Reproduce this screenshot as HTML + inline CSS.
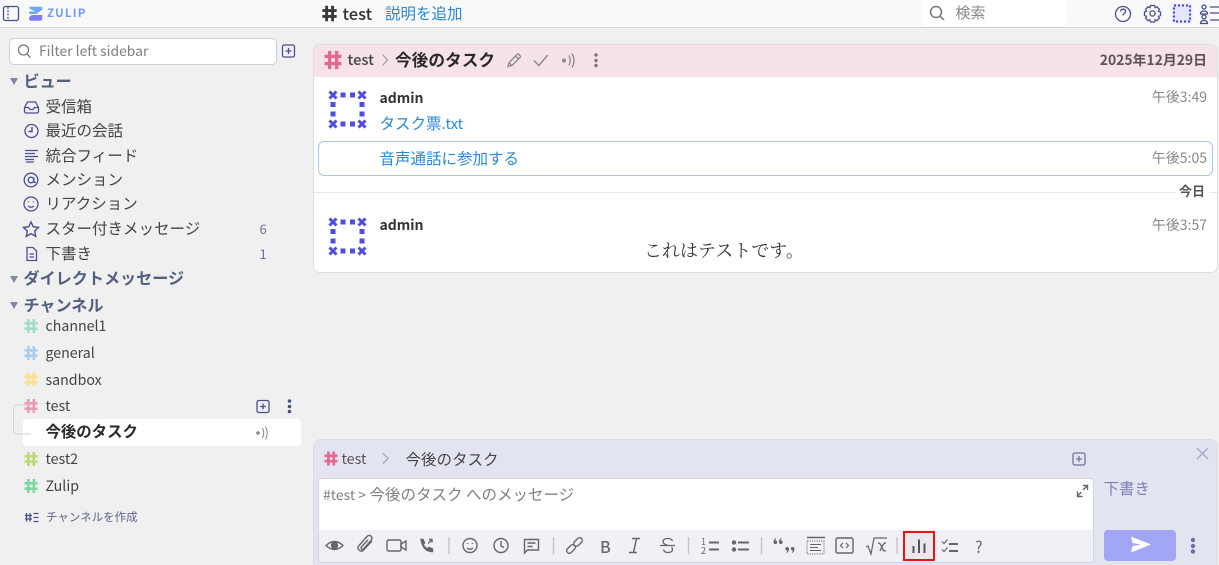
<!DOCTYPE html>
<html lang="ja"><head><meta charset="utf-8"><title>Zulip</title>
<style>
html,body{margin:0;padding:0;width:1219px;height:565px;overflow:hidden;background:#f0f0f0}
body{position:relative;font-family:"Noto Sans CJK JP","Liberation Sans",sans-serif;color:#3b3b3b}
div{position:absolute;box-sizing:border-box}
.t{white-space:nowrap;line-height:20px;height:20px;font-size:15.5px}
.b{font-weight:700}
.sec{font-size:16.1px;font-weight:700;color:#51607f;left:23.500px}
.nav{left:45.500px;color:#444}
.ch{left:45.500px;font-size:14.200px;color:#444}
.ts{font-size:14px;color:#8a8a8a;right:12px}
.cnt{font-size:13px;color:#6a6f9f;left:259.500px}
svg{position:absolute;left:0;top:0;z-index:2}
.t{z-index:3}
</style></head><body>
<div style="left:0;top:0;width:1219px;height:28px;background:#f9f9f9;border-bottom:1px solid #d4d4d4"></div>
<div style="left:921px;top:0;width:146px;height:26px;background:#fff;border-radius:0 0 6px 6px"></div>
<div style="left:9px;top:38px;width:268px;height:27px;background:#fff;border:1px solid #cfcfcf;border-radius:5px"></div>
<div style="left:23px;top:419px;width:278px;height:27px;background:#fff;border-radius:4px"></div>
<div style="left:313px;top:44px;width:905px;height:229px;background:#fff;border:1px solid #dedede;border-radius:7px;overflow:hidden"><div style="left:0;top:0;width:903px;height:32px;background:#f6e3ea"></div></div>
<div style="left:318px;top:141px;width:895px;height:35px;border:1px solid #aac4ea;border-radius:6px"></div>
<div style="left:314px;top:192px;width:862px;height:1px;background:#e8e8e8"></div>
<div style="left:1210px;top:192px;width:7px;height:1px;background:#e8e8e8"></div>
<div style="left:313px;top:439px;width:905px;height:130px;background:#e2e4f0;border:1px solid #dcdcdc;border-radius:8px"></div>
<div style="left:318px;top:478px;width:776px;height:85px;background:#fff;border:1px solid #d3d5e4;border-radius:4px;overflow:hidden"><div style="left:0;top:51px;width:776px;height:34px;background:#f0f1f7"></div></div>
<div style="left:1104px;top:530px;width:72px;height:31px;background:#a3a6f5;border-radius:4px"></div>
<div style="left:903px;top:531px;width:32px;height:30px;background:#e8e8ee;border:2px solid #ee1111;z-index:1"></div>

<svg width="1219" height="565" viewBox="0 0 1219 565" fill="none">
<defs>
<g id="h" stroke-width="2.6"><path d="M-6.500-2.700H6.500M-6.500 2.700H6.500M-2.600-7V7M2.800-7V7"/></g>
<g id="av" fill="#4f4fd8">
<path d="M-3.500-3.500 3.500 3.500M3.500-3.500-3.500 3.500" stroke="#4f4fd8" stroke-width="3" transform="translate(333 95)"/>
<path d="M-3.500-3.500 3.500 3.500M3.500-3.500-3.500 3.500" stroke="#4f4fd8" stroke-width="3" transform="translate(362 95)"/>
<path d="M-3.500-3.500 3.500 3.500M3.500-3.500-3.500 3.500" stroke="#4f4fd8" stroke-width="3" transform="translate(333 124)"/>
<path d="M-3.500-3.500 3.500 3.500M3.500-3.500-3.500 3.500" stroke="#4f4fd8" stroke-width="3" transform="translate(362 124)"/>
<rect x="340.500" y="92.500" width="5" height="5"/><rect x="350" y="92.500" width="5" height="5"/>
<rect x="340.500" y="121.500" width="5" height="5"/><rect x="350" y="121.500" width="5" height="5"/>
<rect x="330.500" y="102" width="5" height="5"/><rect x="330.500" y="111.500" width="5" height="5"/>
<rect x="359.500" y="102" width="5" height="5"/><rect x="359.500" y="111.500" width="5" height="5"/>
</g>
<g id="plus"><rect x="-6" y="-6" width="12" height="12" rx="1.800" stroke-width="1.300"/><path d="M-3 0H3M0-3V3" stroke-width="1.300"/></g>
</defs>
<!-- top left -->
<g stroke="#4a4f8f" stroke-width="1.300"><rect x="3.500" y="6.500" width="15" height="14" rx="2"/><path d="M8 7v13" stroke-dasharray="1.800 1.500"/></g>
<path d="M30.500 6.700H42.300V9.500L36.500 14H30.500Q29 14 29 12.500V11.500H35L29 8.200Q29 6.700 30.500 6.700Z" fill="#6fa8f8"/>
<path d="M32 15H42.300V18Q42.300 20.800 39.500 20.800H31.500Q29 20.800 29 18.500Q29 16.500 32 15Z" fill="#7c7cf5"/>
<!-- filter search -->
<g stroke="#777" stroke-width="1.300"><circle cx="23.500" cy="50" r="5"/><path d="M27 54l3.500 3.500"/></g>
<g transform="translate(288.500 51)" stroke="#4a4f8f"><use href="#plus"/></g>
<!-- carets -->
<path d="M10 78h8l-4 7zM10 276h8l-4 7zM10 302h8l-4 7z" fill="#7f8aa3"/>
<!-- nav icons -->
<g stroke="#4a4f8f" stroke-width="1.300">
<path d="M24.500 107.500l3-5.500h8l3 5.500v3.500q0 2-2 2h-10q-2 0-2-2zM24.500 107.500h4l1.500 2h3l1.500-2h4"/>
<circle cx="31.500" cy="131" r="6.500"/><path d="M32 127v4.500h-3.500" stroke-width="1.500"/>
<path d="M25 150.500h13M25 153.500h10M25 156.500h13M25 159.500h9M26 162h8" />
<circle cx="31" cy="180" r="6.800"/><circle cx="31" cy="180" r="2.800"/><path d="M33.800 177.500v3.500q0 1.500 2 1.500" />
<circle cx="31" cy="204" r="7"/><path d="M28 206q3 2.500 6 0" /><path d="M28.500 201.500v.8M33.500 201.500v.8" stroke-width="1.800"/>
<path d="M31 222l2.200 4.700 5.300.7-3.800 3.700 1 5.200-4.700-2.600-4.700 2.600 1-5.200-3.800-3.700 5.300-.7z" stroke-width="1.400"/>
<path d="M27 247.500h6l3.500 3.500v9.500h-9.500zM29.500 254h4.500M29.500 257h4.500"/>
</g>
<!-- channel hashes -->
<use href="#h" transform="translate(31 326)" stroke="#a0dfc3"/>
<use href="#h" transform="translate(31 353)" stroke="#a8cdee"/>
<use href="#h" transform="translate(31 379.500)" stroke="#fbe08c"/>
<use href="#h" transform="translate(31 406)" stroke="#ec9bb5"/>
<use href="#h" transform="translate(31 459)" stroke="#c0d878"/>
<use href="#h" transform="translate(31 486)" stroke="#7fd8a3"/>
<path d="M31 405h-14q-3.500 0-3.500 3.500v22q0 3.500 3.500 3.500h14" stroke="#d4d4d4"/>
<g transform="translate(263 406.500)" stroke="#4a4f8f"><use href="#plus"/></g>
<g fill="#4a4f8f"><circle cx="289.500" cy="401" r="1.800"/><circle cx="289.500" cy="406.500" r="1.800"/><circle cx="289.500" cy="411.500" r="1.800"/></g>
<g stroke="#888" stroke-width="1"><circle cx="258" cy="433" r="1.300" fill="#888"/><path d="M262.500 428q2.500 5 0 10M265.500 426.500q3.500 6.500 0 13"/></g>
<g stroke="#4a4f8f" stroke-width="1.300"><path d="M25 515.500h7M25 519h7M26.500 513v8.500M30 513v8.500M33.500 513.500h5M33.500 517.500h5M33.500 521.500h5"/></g>
<!-- top hash -->
<use href="#h" transform="translate(329.500 13.500) scale(1.100)" stroke="#3a3a3a"/>
<g stroke="#777" stroke-width="1.500"><circle cx="936" cy="12" r="5.500"/><path d="M940 16l4 4"/></g>
<g stroke="#4a4f8f" stroke-width="1.300">
<circle cx="1123" cy="14" r="7.500"/>
<path d="M1120.500 11.500q.3-2.300 2.500-2.300 2.500 0 2.500 2.200 0 1.300-1.500 2.100-1 .6-1 2" />
<circle cx="1152.500" cy="13.500" r="2.600"/>
<path d="M1150.500 5.500h4l.6 2.200 2-.9 2.300 2.500-1 1.900 2.100.8v3.500l-2.100.8 1 1.900-2.300 2.500-2-.9-.6 2.200h-4l-.6-2.200-2 .9-2.300-2.500 1-1.900-2.100-.8v-3.500l2.100-.8-1-1.900 2.300-2.500 2 .9z"/>
<circle cx="1204" cy="7" r="2"/><path d="M1200.500 14q0-3 3.500-3t3.500 3zM1210 7h9M1210 13h9M1210 20h9"/><circle cx="1204" cy="17" r="2"/><path d="M1200.500 23.500q0-3 3.500-3t3.500 3z"/>
</g>
<rect x="1172" y="3.500" width="20" height="20" rx="2" fill="#e6e8fa"/>
<rect x="1174" y="5.500" width="16" height="16" stroke="#3f3fe0" stroke-width="2" stroke-dasharray="2 2"/>
<!-- msg header -->
<use href="#h" transform="translate(333 60) scale(1.300)" stroke="#e2698f"/>
<path d="M382.500 54.500l5 5.500-5 5.500" stroke="#a6a0a3" stroke-width="1.300"/>
<g stroke="#888" stroke-width="1.300">
<path d="M508 66.500l1-3.800 8-8.200q1-1 2.500.5t.5 2.500l-8 8zM515.500 56l3 3M509 62.700l2.700 2.800"/>
<path d="M534 60.500l4.800 5 9-10.500" stroke-width="1.400"/>
<circle cx="564" cy="60.500" r="1.300" fill="#888"/><path d="M569 55.500q2.500 5 0 10M572 53.500q4 7 0 14"/>
</g>
<g fill="#777"><circle cx="596" cy="55" r="1.700"/><circle cx="596" cy="60.500" r="1.700"/><circle cx="596" cy="65.500" r="1.700"/></g>
<use href="#av"/>
<use href="#av" transform="translate(0 127)"/>
<!-- compose -->
<use href="#h" transform="translate(331 458.500)" stroke="#e2698f"/>
<path d="M383 453.500l5 5-5 5" stroke="#a2a4b5" stroke-width="1.300"/>
<g transform="translate(1079 459)" stroke="#6d72a8"><use href="#plus"/></g>
<path d="M1197 448l11 11M1208 448l-11 11" stroke="#9a9ec8" stroke-width="1.200"/>
<g stroke="#666" stroke-width="1.400"><path d="M1083 490l4-4M1083 485.500h4.500v4.500M1077.500 496l4-4"/><path d="M1077.500 491.500v5h5"/></g>
<path d="M1131 536.500l20 8-20 8 1.500-6.500 8.500-1.500-8.500-1.500z" fill="#fff"/>
<g fill="#6a6fa8"><circle cx="1193" cy="540" r="2.200"/><circle cx="1193" cy="546" r="2.200"/><circle cx="1193" cy="551.500" r="2.200"/></g>
<!-- toolbar -->
<g stroke="#666" stroke-width="1.400">
<path d="M326 545.500q8.500-8 17 0-8.500 8-17 0z"/><circle cx="334.500" cy="545.500" r="3" fill="#666"/>
<path d="M372 541l-8 8.500q-2.500 3-5 .5t.5-5l7.500-8.500q2-2 4-.3t0 4.300l-7.500 8.500q-1 1-2-.1t0-2l6.500-7"/>
<rect x="387" y="540" width="14" height="11" rx="1.500"/><path d="M401 544l5-3v9l-5-3z"/>
<path d="M421 539.500l2 0 1.500 3.500-1.500 1.500q1.500 3 4.500 4.500l1.500-1.500 3.500 1.500v2.500q-9 .5-11.500-12z" fill="#666"/>
<path d="M428 543.500l4-4M429 539.500h3v3" />
<path d="M449 537v17M553.500 537v17M688.500 537v17M761.500 537v17M897 537v17" stroke="#c4c4c8"/>
<circle cx="470" cy="545.500" r="7"/><path d="M467 548q3 2.500 6 0"/><path d="M467.500 543v.8M472.500 543v.8" stroke-width="1.800"/>
<circle cx="501" cy="545.500" r="7"/><path d="M501 541v5l3 1.500"/>
<path d="M524.500 539.500h14v10.500h-11l-3 3zM527.500 543h8M527.500 546.500h5"/>
<rect x="-5" y="-2.700" width="10" height="5.400" rx="2.700" transform="translate(578 542) rotate(-45)"/>
<rect x="-5" y="-2.700" width="10" height="5.400" rx="2.700" transform="translate(571 549) rotate(-45)"/>
<path d="M629 552.500h8M632 538.500h8M636.500 538.500l-3 14" stroke-width="1.500"/>
<path d="M660 545.500h15M672.500 541q-1-2.500-4.500-2.500-5 0-5 3 0 2.500 4 3.500M663.500 549.500q.5 3 4.500 3 4.500 0 4.500-3 0-1.500-1-2.500" stroke-width="1.300"/>
<path d="M709 542.500h10M709 549.500h10" stroke-width="2"/>
<path d="M738 542.500h11M738 549.500h11" stroke-width="2"/>
<circle cx="734" cy="542.500" r="1.500" fill="#666"/><circle cx="734" cy="549.500" r="1.500" fill="#666"/>
<path d="M807 537.500h18" stroke-width="1.600"/>
<path d="M807 541h17v13h-17z" stroke-dasharray="1.200 1.200" stroke-width="1"/>
<path d="M810 544.500h11M810 547.500h8M810 550.500h11" stroke-width="1"/>
<rect x="836" y="538" width="17" height="15" rx="1.500"/><path d="M843 543l-2.500 2.500 2.500 2.500M846 543l2.500 2.500-2.500 2.500" stroke-width="1.200"/>
<path d="M866 547l2-1 3 8 3-16h13" stroke-width="1.200"/>
<path d="M878 543q2 0 3 2.500t2.500 5q1 1 2.500 0M886 543q-1.500-.5-3 2t-3 6" stroke-width="1.300"/>
<path d="M913.500 546v7M919 539.500v13.500M924.500 543.500v9.500" stroke="#555" stroke-width="2"/>
<path d="M942 541.500l2 2 3.500-4M942 549.500l2 2 3.500-4" stroke-width="1.200"/>
<path d="M949 544h9M949 551h9" stroke-width="2"/>
</g>
<g fill="#666"><path d="M782 537.500q-3 1.500-3 4.500 0 2 1.800 2t1.800-1.800-1.800-1.700q0-1.500 1.200-3zM776.500 537.500q-3 1.500-3 4.500 0 2 1.800 2t1.800-1.800-1.800-1.700q0-1.500 1.200-3z"/>
<path d="M786 553.500q3-1.500 3-4.500 0-2-1.800-2t-1.800 1.800 1.800 1.700q0 1.500-1.200 3zM791.500 553.500q3-1.500 3-4.500 0-2-1.800-2t-1.800 1.800 1.800 1.700q0 1.500-1.200 3z"/></g>
</svg>

<!-- top text -->
<div class="t b" style="left:47px;top:3px;font-size:11.500px;letter-spacing:1.200px;color:#6e9cf5">ZULIP</div>
<div class="t" style="left:342.500px;top:3px;font-size:16.500px;font-weight:500;color:#333">test</div>
<div class="t" style="left:385px;top:3px;color:#2a8ad0">説明を追加</div>
<div class="t" style="left:955.500px;top:3px;font-size:15px;color:#888">検索</div>

<!-- sidebar text -->
<div class="t" style="left:39px;top:41px;font-size:13.900px;color:#808080">Filter left sidebar</div>
<div class="t sec" style="top:70px">ビュー</div>
<div class="t nav" style="top:96px">受信箱</div>
<div class="t nav" style="top:120px">最近の会話</div>
<div class="t nav" style="top:145px">統合フィード</div>
<div class="t nav" style="top:169px">メンション</div>
<div class="t nav" style="top:193px">リアクション</div>
<div class="t nav" style="top:218px">スター付きメッセージ</div>
<div class="t nav" style="top:243px">下書き</div>
<div class="t cnt" style="top:219px">6</div>
<div class="t cnt" style="top:244px">1</div>
<div class="t sec" style="top:267px">ダイレクトメッセージ</div>
<div class="t sec" style="top:293.500px">チャンネル</div>
<div class="t ch" style="top:316px">channel1</div>
<div class="t ch" style="top:343px">general</div>
<div class="t ch" style="top:369.500px">sandbox</div>
<div class="t ch" style="top:396px">test</div>
<div class="t b" style="left:45.500px;top:421px;font-size:15.400px;color:#2a2a2a">今後のタスク</div>
<div class="t ch" style="top:449px">test2</div>
<div class="t ch" style="top:476px">Zulip</div>
<div class="t" style="left:46px;top:507px;font-size:11.500px;color:#5f6491">チャンネルを作成</div>

<!-- messages text -->
<div class="t" style="left:347.500px;top:50px;font-size:14.700px;font-weight:500;color:#444">test</div>
<div class="t b" style="left:395px;top:49px;font-size:16.700px;color:#2a2a2a">今後のタスク</div>
<div class="t b" style="right:12px;top:50px;font-size:13.900px;color:#5d5458">2025年12月29日</div>
<div class="t b" style="left:379.500px;top:88px;font-size:14px;color:#333">admin</div>
<div class="t ts" style="top:87px">午後3:49</div>
<div class="t" style="left:379.500px;top:113px;color:#2a8ad0"><span>タスク票</span><span style="font-size:14.500px">.txt</span></div>
<div class="t" style="left:379.500px;top:147.500px;color:#2a8ad0">音声通話に参加する</div>
<div class="t ts" style="top:147.500px">午後5:05</div>
<div class="t b" style="left:1179px;top:181px;font-size:13px;color:#555">今日</div>
<div class="t b" style="left:379.500px;top:215px;font-size:14px;color:#333">admin</div>
<div class="t ts" style="top:215px">午後3:57</div>
<div class="t" style="left:644px;top:240px;font-size:18px;color:#333;font-family:'Noto Serif CJK JP','Liberation Serif',serif">これはテストです。</div>

<!-- compose text -->
<div class="t" style="left:341.500px;top:449px;font-size:14.300px;color:#555">test</div>
<div class="t" style="left:405.500px;top:449px;color:#444">今後のタスク</div>
<div class="t" style="left:323px;top:484px;color:#808080"><span style="font-size:14px">#test &gt;</span> 今後のタスク へのメッセージ</div>
<div class="t" style="left:1103.500px;top:478px;color:#7d80b8">下書き</div>
<div class="t" style="left:975px;top:536px;font-size:16px;color:#666">?</div>
<div class="t" style="left:600px;top:536px;font-size:16px;color:#666;font-weight:500">B</div>
<div class="t" style="left:701px;top:532px;font-size:9px;color:#666">1</div>
<div class="t" style="left:701px;top:541px;font-size:9px;color:#666">2</div>
</body></html>
